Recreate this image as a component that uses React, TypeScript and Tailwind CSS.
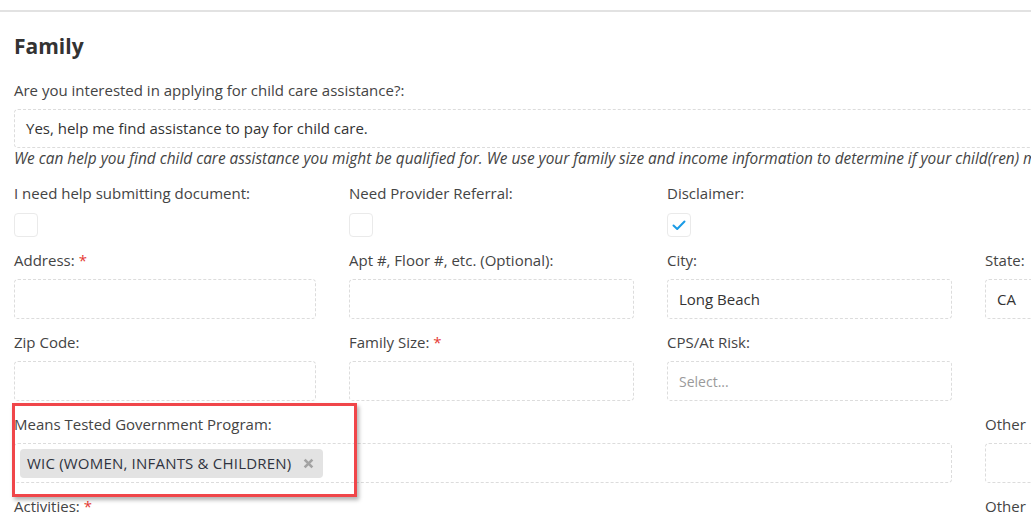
const font = { fontFamily: '"Open Sans", "Noto Sans", Arial, sans-serif' };

function Label({ children, required }: { children: React.ReactNode; required?: boolean }) {
  return (
    <div className="h-[21px] whitespace-nowrap text-[15px] leading-[21px] text-[#444]">
      {children}
      {required && <span className="ml-1 text-[#e53935]">*</span>}
    </div>
  );
}

function Input({ value, placeholder }: { value?: string; placeholder?: string }) {
  return (
    <div className="mt-2 flex h-10 items-center rounded border border-dashed border-[#dcdcdc] px-[11px] text-[15px] text-[#333]">
      {value ?? <span className="text-[14px] text-[#9a9a9a]">{placeholder}</span>}
    </div>
  );
}

function Checkbox({ checked }: { checked?: boolean }) {
  return (
    <div className="mt-[9px] flex h-6 w-6 items-center justify-center rounded-sm border border-[#eaeaea] bg-white">
      {checked && (
        <svg width="16" height="16" viewBox="0 0 16 16" fill="none">
          <path d="M2.5 8.5 L6.2 12 L13.5 4.5" stroke="#1a9be6" strokeWidth="2" strokeLinecap="round" strokeLinejoin="round" />
        </svg>
      )}
    </div>
  );
}

export default function App() {
  return (
    <div className="relative h-[524px] w-full overflow-hidden bg-white" style={font}>
      <div className="mt-[10px] h-[2px] w-full bg-[#e2e2e2]" />
      <div className="w-[1200px] px-[14px]">
        <h2 className="mt-[20px] text-[21px] font-bold leading-[28px] text-[#333]">Family</h2>

        <div className="mt-[20px]">
          <Label>Are you interested in applying for child care assistance?:</Label>
          <div className="mt-2 flex h-[39px] items-center rounded border border-dashed border-[#dcdcdc] px-[11px] text-[15px] text-[#333]">
            Yes, help me find assistance to pay for child care.
          </div>
          <p className="h-[22px] whitespace-nowrap text-[15.4px] italic leading-[22px] text-[#444]">
            We can help you find child care assistance you might be qualified for. We use your family size and income information to determine if your child(ren) may qualify.
          </p>
        </div>

        <div className="mt-[13px] grid grid-cols-[302px_285px_285px_285px] gap-x-[33px] gap-y-[13px]">
          <div>
            <Label>I need help submitting document:</Label>
            <Checkbox />
          </div>
          <div>
            <Label>Need Provider Referral:</Label>
            <Checkbox />
          </div>
          <div>
            <Label>Disclaimer:</Label>
            <Checkbox checked />
          </div>
          <div />

          <div>
            <Label required>Address:</Label>
            <Input />
          </div>
          <div>
            <Label>Apt #, Floor #, etc. (Optional):</Label>
            <Input />
          </div>
          <div>
            <Label>City:</Label>
            <Input value="Long Beach" />
          </div>
          <div>
            <Label>State:</Label>
            <Input value="CA" />
          </div>

          <div>
            <Label>Zip Code:</Label>
            <Input />
          </div>
          <div>
            <Label required>Family Size:</Label>
            <Input />
          </div>
          <div>
            <Label>CPS/At Risk:</Label>
            <Input placeholder="Select..." />
          </div>
          <div />

          <div className="col-span-3">
            <Label>Means Tested Government Program:</Label>
            <div className="mt-2 flex h-10 items-center rounded border border-dashed border-[#dcdcdc] px-[5px]">
              <span className="flex h-[29px] items-center gap-[12px] rounded-sm bg-[#e3e3e3] pl-[7px] pr-[9px] text-[15px] tracking-[0.2px] text-[#2f3340]">
                WIC (WOMEN, INFANTS &amp; CHILDREN)
                <svg width="11" height="11" viewBox="0 0 10 10">
                  <path d="M1.5 1.5 L8.5 8.5 M8.5 1.5 L1.5 8.5" stroke="#a3a3a3" strokeWidth="2.4" />
                </svg>
              </span>
            </div>
          </div>
          <div>
            <Label>Other</Label>
            <Input />
          </div>

          <div className="col-span-3">
            <Label required>Activities:</Label>
            <Input />
          </div>
          <div>
            <Label>Other</Label>
            <Input />
          </div>
        </div>
      </div>

      <div className="absolute left-[12px] top-[403px] h-[94px] w-[345px] border-[3px] border-[#f0464a] shadow-[2px_3px_4px_rgba(0,0,0,0.3)]" />
    </div>
  );
}
